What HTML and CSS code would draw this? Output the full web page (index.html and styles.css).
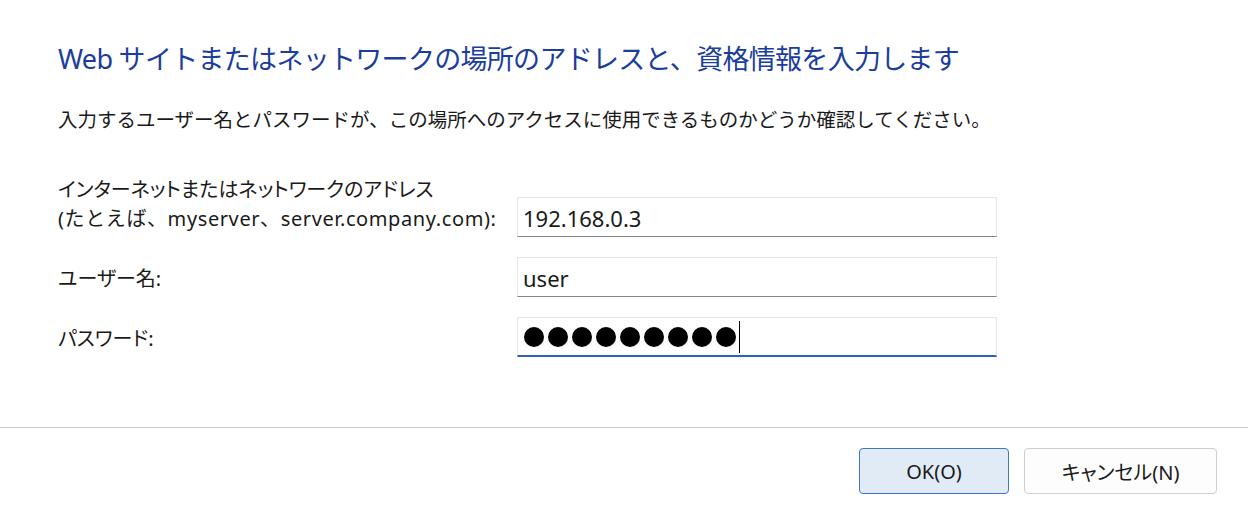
FILE: index.html
```html
<!DOCTYPE html>
<html lang="ja">
<head>
<meta charset="utf-8">
<title>資格情報</title>
<link rel="stylesheet" href="styles.css">
</head>
<body>
<div class="dialog">
  <div class="content">
    <h1 class="title">Web サイトまたはネットワークの場所のアドレスと、資格情報を入力します</h1>
    <p class="desc">入力するユーザー名とパスワードが、この場所へのアクセスに使用できるものかどうか確認してください。</p>
    <div class="form">
      <div class="row">
        <div class="label"><span class="line">インターネットまたはネットワークのアドレス</span><span class="line example">(たとえば、myserver、server.company.com):</span></div>
        <div class="field"><span class="value">192.168.0.3</span></div>
      </div>
      <div class="row">
        <div class="label">ユーザー名:</div>
        <div class="field"><span class="value">user</span></div>
      </div>
      <div class="row">
        <div class="label">パスワード:</div>
        <div class="field focused">
          <span class="dots"><i></i><i></i><i></i><i></i><i></i><i></i><i></i><i></i><i></i></span><span class="caret"></span>
        </div>
      </div>
    </div>
  </div>
  <div class="footer">
    <button class="btn primary">OK(O)</button>
    <button class="btn">キャンセル(N)</button>
  </div>
</div>
</body>
</html>
```
FILE: styles.css
```css
* { box-sizing: border-box; }
html, body { margin: 0; padding: 0; background: #ffffff; }
body {
  width: 1248px;
  height: 527px;
  overflow: hidden;
  font-family: "Noto Sans", "Noto Sans CJK JP", sans-serif;
  color: #1a1a1a;
}
.dialog { display: flex; flex-direction: column; height: 527px; }
.content { padding: 41px 0 0 58px; height: 427px; }
.title {
  margin: 0;
  font-weight: 400;
  font-size: 27px;
  line-height: 36px;
  letter-spacing: -0.7px;
  color: #1b3d9c;
  white-space: nowrap;
}
.desc {
  margin: 29px 0 0 0;
  font-size: 19.5px;
  line-height: 28px;
  white-space: nowrap;
}
.form { margin-top: 41px; display: flex; flex-direction: column; gap: 20px; }
.row { display: grid; grid-template-columns: 459px 480px; align-items: end; }
.label {
  font-size: 20px;
  line-height: 29px;
  padding-bottom: 4px;
  white-space: nowrap;
  font-feature-settings: "palt";
}
.line { display: block; }
.line.example { font-feature-settings: normal; letter-spacing: 0.6px; }
.field {
  height: 40px;
  border: 1px solid #e6e6e6;
  border-bottom: 1px solid #868686;
  background: #fff;
  display: flex;
  align-items: center;
  padding-left: 5px;
  font-size: 22px;
}
.field.focused { border-bottom: 2px solid #2b62b8; padding-left: 6px; }
.value { line-height: 30px; padding-top: 2px; }
.dots { display: flex; gap: 4px; }
.dots i { display: block; width: 20px; height: 20px; border-radius: 50%; background: #000; }
.caret { display: block; width: 1px; height: 32px; background: #000; margin-left: 3px; }
.footer {
  border-top: 1px solid #cccccc;
  flex: 1;
  display: flex;
  justify-content: flex-end;
  align-items: flex-start;
  gap: 15px;
  padding: 20px 31px 0 0;
}
.btn {
  font-family: inherit;
  font-feature-settings: "palt";
  font-size: 20px;
  color: #1a1a1a;
  height: 46px;
  border-radius: 4px;
  border: 1px solid #cfcfcf;
  background: #fdfdfd;
  width: 193px;
  padding: 0;
}
.btn.primary { width: 150px; background: #e1ebf6; border-color: #3b78c9; }
```
